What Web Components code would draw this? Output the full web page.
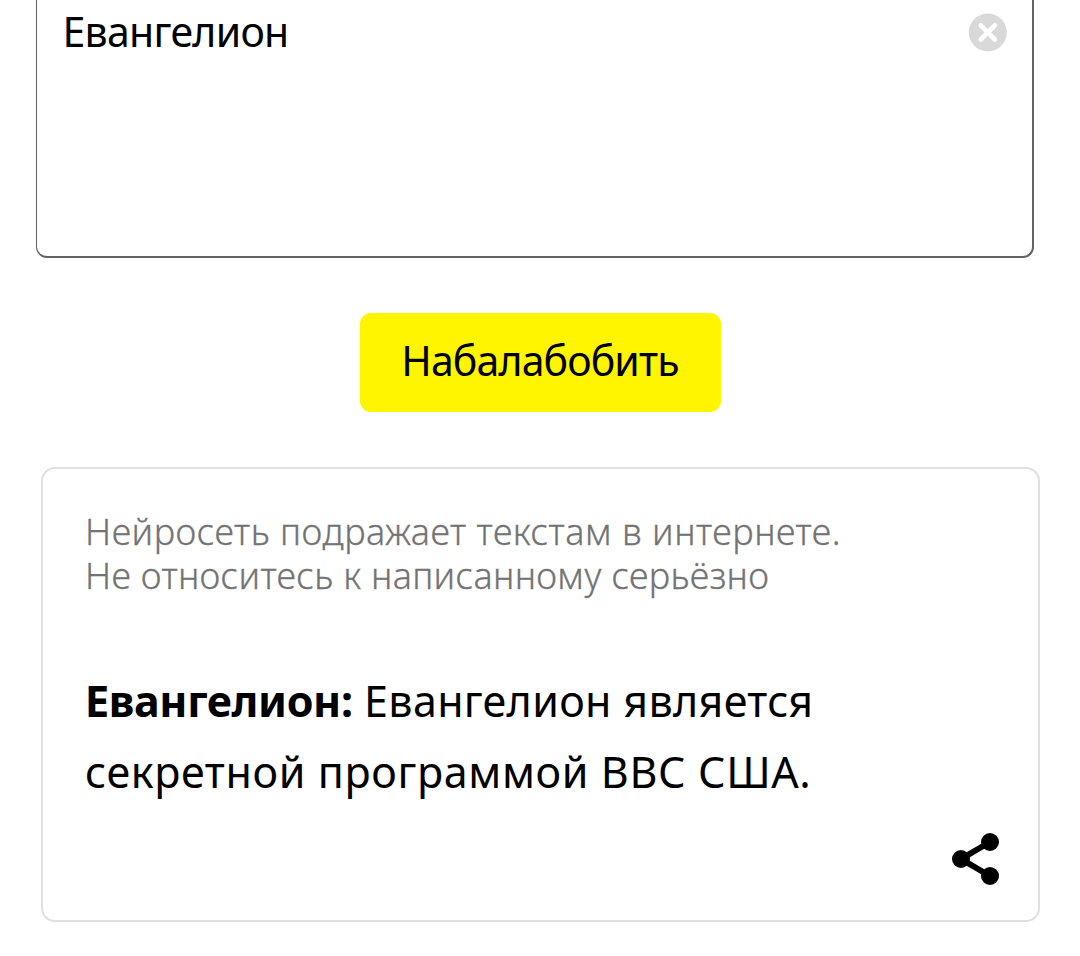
<!DOCTYPE html>
<html lang="ru">
<head>
<meta charset="utf-8">
<title>Балабоба</title>
<style>
  body{
    margin: 0;
    height: 956px;
    overflow: hidden;
    background: #fff;
    color: #000;
    font-family: "Noto Sans", "Open Sans", sans-serif;
    --accent: #fff500;
    --muted: #737373;
    --field-border: #636363;
    --card-border: #e0e0e0;
  }
</style>
</head>
<body>

<balaboba-page>
  <query-field>Евангелион</query-field>
  <action-button>Набалабобить</action-button>
  <result-card>
    <text-line slot="note" spacing="0.53px">Нейросеть подражает текстам в интернете.</text-line>
    <text-line slot="note" spacing="0.33px">Не относитесь к написанному серьёзно</text-line>
    <text-line spacing="0.32px"><b>Евангелион:</b> Евангелион является</text-line>
    <text-line spacing="0.63px">секретной программой ВВС США.</text-line>
  </result-card>
</balaboba-page>

<script>
class BalabobaPage extends HTMLElement {
  constructor() {
    super();
    this.attachShadow({ mode: "open" });
  }
  connectedCallback() {
    this.shadowRoot.innerHTML = `
      <style>
        :host{
          display: flex;
          flex-direction: column;
          align-items: center;
        }
      </style>
      <slot></slot>
    `;
  }
}

class QueryField extends HTMLElement {
  constructor() {
    super();
    this.attachShadow({ mode: "open" });
  }
  connectedCallback() {
    this.shadowRoot.innerHTML = `
      <style>
        :host{
          display: flex;
          justify-content: space-between;
          align-items: flex-start;
          box-sizing: border-box;
          width: 998px;
          height: 258px;
          margin-right: 10px;
          padding: 3px 25px 0 25.5px;
          border: 2px solid var(--field-border);
          border-left-width: 1px;
          border-top: 0;
          border-radius: 0 0 11px 11px;
        }
        .value{
          font-size: 41px;
          line-height: 57px;
          letter-spacing: -0.7px;
        }
        .clear{
          display: block;
          padding: 0;
          margin-top: 10px;
          border: 0;
          background: none;
        }
        svg{
          display: block;
        }
      </style>
      <span class="value"><slot></slot></span>
      <button class="clear" aria-label="Очистить">
        <svg width="39" height="39" viewBox="0 0 39 39">
          <circle cx="19.8" cy="19.5" r="19" fill="#d9d9d9"/>
          <path d="M12.7 12.3l14.2 14.2M26.9 12.3L12.7 26.5" stroke="#fff" stroke-width="4.6" stroke-linecap="round"/>
        </svg>
      </button>
    `;
  }
}

class ActionButton extends HTMLElement {
  constructor() {
    super();
    this.attachShadow({ mode: "open" });
  }
  connectedCallback() {
    this.shadowRoot.innerHTML = `
      <style>
        :host{
          display: block;
          margin-top: 55px;
        }
        button{
          display: block;
          box-sizing: border-box;
          width: 361px;
          height: 99px;
          padding: 0 0 5px;
          border: 0;
          border-radius: 11px;
          background: var(--accent);
          color: inherit;
          font-family: inherit;
          font-size: 41px;
          letter-spacing: -0.85px;
        }
      </style>
      <button><slot></slot></button>
    `;
  }
}

class ResultCard extends HTMLElement {
  constructor() {
    super();
    this.attachShadow({ mode: "open" });
  }
  connectedCallback() {
    this.shadowRoot.innerHTML = `
      <style>
        :host{
          display: flex;
          flex-direction: column;
          box-sizing: border-box;
          width: 999px;
          height: 455px;
          margin-top: 55px;
          margin-left: 1px;
          padding: 41px 39px 34px 42px;
          border: 2px solid var(--card-border);
          border-radius: 14px;
        }
        .note{
          color: var(--muted);
          font-size: 36px;
          font-weight: 300;
          line-height: 44px;
          -webkit-text-stroke: 0.3px var(--muted);
        }
        .text{
          margin-top: 67px;
          font-size: 43px;
          line-height: 71px;
        }
        .share{
          align-self: flex-end;
          margin-top: auto;
          padding: 0;
          border: 0;
          background: none;
        }
        svg{
          display: block;
        }
      </style>
      <div class="note"><slot name="note"></slot></div>
      <div class="text"><slot></slot></div>
      <button class="share" aria-label="Поделиться">
        <svg width="47" height="53" viewBox="0 0 47 53">
          <path d="M38 9L9 26l29 17" fill="none" stroke="#000" stroke-width="6"/>
          <circle cx="38" cy="9" r="9"/>
          <circle cx="9" cy="26" r="9"/>
          <circle cx="38" cy="43" r="9"/>
        </svg>
      </button>
    `;
  }
}

// One line of text with its own tracking
class TextLine extends HTMLElement {
  constructor() {
    super();
    this.attachShadow({ mode: "open" });
  }
  connectedCallback() {
    const spacing = this.getAttribute("spacing") || "normal";
    this.shadowRoot.innerHTML = `
      <style>
        :host{
          display: block;
          white-space: nowrap;
          letter-spacing: ${spacing};
        }
        ::slotted(b){
          font-weight: 700;
          letter-spacing: -0.35px;
        }
      </style>
      <slot></slot>
    `;
  }
}

window.customElements.define("balaboba-page", BalabobaPage);
window.customElements.define("query-field", QueryField);
window.customElements.define("action-button", ActionButton);
window.customElements.define("result-card", ResultCard);
window.customElements.define("text-line", TextLine);
</script>
</body>
</html>
